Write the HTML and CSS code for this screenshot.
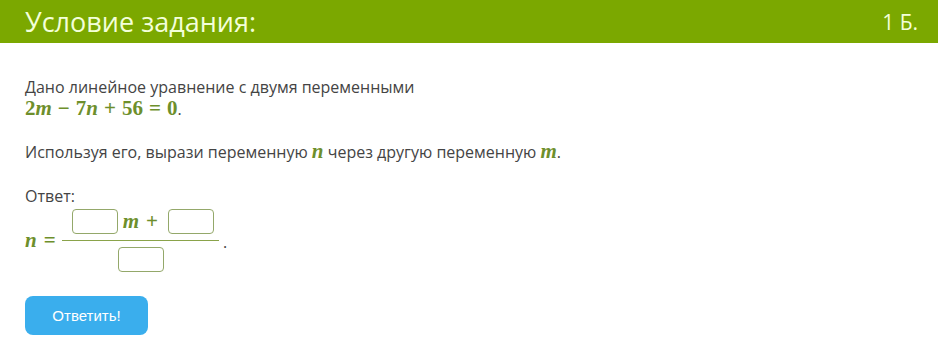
FILE: index.html
```html
<!DOCTYPE html>
<html lang="ru">
  <head>
    <meta charset="UTF-8" />
    <meta name="viewport" content="width=device-width, initial-scale=1.0" />
    <title>Условие задания</title>
    <link rel="stylesheet" href="styles.css">
  </head>
  <body>
    <div class="header">
      <h1>Условие задания:</h1>
      <span class="points">1 Б.</span>
    </div>

    <div class="task">
      <p>
        Дано линейное уравнение с двумя переменными<br />
        <span class="math">2<i>m</i><span class="op">−</span>7<i>n</i><span class="op">+</span>56<span class="op">=</span>0</span>.
      </p>

      <p>
        Используя его, вырази переменную <span class="math"><i>n</i></span> через другую переменную <span class="math"><i>m</i></span>.
      </p>

      <p class="answer-label">Ответ:</p>
      <div class="equation">
        <span class="math lhs"><i>n</i><span class="op">=</span></span>
        <div class="frac">
          <div class="num">
            <input class="box" type="text" />
            <span class="math"><i>m</i><span class="op">+</span></span>
            <input class="box" type="text" />
          </div>
          <div class="den">
            <input class="box" type="text" />
          </div>
        </div>
        <span class="dot">.</span>
      </div>

      <button class="submit">Ответить!</button>
    </div>
  </body>
</html>
```

FILE: styles.css
```css
body {
    font-family: "Open Sans", sans-serif;
    color: #444;
    margin: 0;
    padding: 0;
    background-color: #fff;
}
.header {
    background-color: #7ba800;
    height: 43px;
    display: flex;
    justify-content: space-between;
    align-items: center;
    padding: 0 20px 0 25px;
}
.header h1 {
    margin: 0;
    font-size: 27px;
    font-weight: normal;
    color: #f3ffd9;
    line-height: 38px;
}
.points {
    font-size: 21px;
    color: #f3ffd9;
}
.task {
    padding: 20px 25px;
    font-size: 16px;
    line-height: 21px;
}
.task p {
    margin: 14px 0 21px;
}
.math {
    font-family: "Liberation Serif", serif;
    font-size: 21px;
    font-weight: bold;
    color: #6e8f2c;
}
.math i {
    font-style: italic;
}
.op {
    margin: 0 6px;
}
.task p.answer-label {
    margin: 23px 0 0;
}
.equation {
    display: flex;
    align-items: center;
    margin-top: 2px;
}
.lhs .op {
    margin: 0 6px 0 7px;
}
.frac {
    display: flex;
    flex-direction: column;
    align-items: center;
    padding: 0 4px 0 0;
}
.num {
    display: flex;
    align-items: center;
    border-bottom: 1px solid #8aa34a;
    padding: 0 5px 6px 10px;
}
.num .math {
    margin: 0 10px 0 5px;
}
.num .op {
    margin: 0 0 0 7px;
}
.den {
    padding-top: 6px;
    margin-left: 2px;
}
.box {
    width: 46px;
    height: 25px;
    box-sizing: border-box;
    border: 1px solid #94a86a;
    border-radius: 4px;
    padding: 0;
    background: #fff;
}
.dot {
    font-size: 16px;
    margin-top: 4px;
}
.submit {
    margin-top: 24px;
    background-color: #3aaeed;
    color: #fff;
    border: none;
    border-radius: 8px;
    width: 123px;
    height: 39px;
    font-family: "Liberation Sans", Arial, sans-serif;
    font-size: 15px;
}
```
